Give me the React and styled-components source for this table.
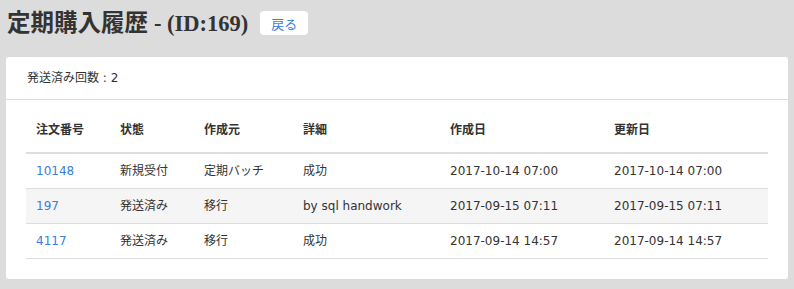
import React from "react";
import styled, { createGlobalStyle } from "styled-components";

const GlobalStyle = createGlobalStyle`
  html, body {
    margin: 0;
    padding: 0;
    background: #dcdcdc;
  }
  body {
    font-family: "DejaVu Sans", "Noto Sans CJK JP", sans-serif;
    color: #333;
  }
`;

const rows = [
  { id: "10148", status: "新規受付", source: "定期バッチ", detail: "成功", created: "2017-10-14 07:00", updated: "2017-10-14 07:00" },
  { id: "197", status: "発送済み", source: "移行", detail: "by sql handwork", created: "2017-09-15 07:11", updated: "2017-09-15 07:11" },
  { id: "4117", status: "発送済み", source: "移行", detail: "成功", created: "2017-09-14 14:57", updated: "2017-09-14 14:57" },
];

const columns = [
  { label: "注文番号", width: 84 },
  { label: "状態", width: 84 },
  { label: "作成元", width: 99 },
  { label: "詳細", width: 147 },
  { label: "作成日", width: 164 },
  { label: "更新日", width: 164 },
];

const App = () => {
  return (
    <>
      <GlobalStyle />
      <Page>
        <TitleBar>
          <Title>
            定期購入履歴 <SubTitle>- (ID:169)</SubTitle>
          </Title>
          <BackButton>戻る</BackButton>
        </TitleBar>
        <Card>
          <CardHeader>発送済み回数 : 2</CardHeader>
          <CardBody>
            <Table>
              <colgroup>
                {columns.map((c) => (
                  <col key={c.label} style={{ width: c.width }} />
                ))}
              </colgroup>
              <thead>
                <tr>
                  {columns.map((c) => (
                    <Th key={c.label}>{c.label}</Th>
                  ))}
                </tr>
              </thead>
              <tbody>
                {rows.map((r, i) => (
                  <Row key={r.id} $striped={i % 2 === 1}>
                    <Td>
                      <Link>{r.id}</Link>
                    </Td>
                    <Td>{r.status}</Td>
                    <Td>{r.source}</Td>
                    <Td>{r.detail}</Td>
                    <Td>{r.created}</Td>
                    <Td>{r.updated}</Td>
                  </Row>
                ))}
              </tbody>
            </Table>
          </CardBody>
        </Card>
      </Page>
    </>
  );
};

const Page = styled.div`
  padding: 10px 6px;
`;

const TitleBar = styled.div`
  display: flex;
  align-items: center;
  height: 26px;
  margin-bottom: 21px;
`;

const Title = styled.h1`
  margin: 0 0 0 1px;
  font-family: "Liberation Serif", "Noto Sans CJK JP", serif;
  font-size: 23.5px;
  font-weight: bold;
  color: #333;
  line-height: 26px;
  white-space: nowrap;
`;

const SubTitle = styled.span`
  font-size: 22.5px;
`;

const BackButton = styled.span`
  margin-left: 12px;
  width: 48px;
  height: 24px;
  display: inline-flex;
  align-items: center;
  justify-content: center;
  background: #fff;
  border-radius: 4px;
  font-family: "Noto Sans CJK JP", sans-serif;
  font-size: 13px;
  color: #3b7ddd;
`;

const Card = styled.div`
  background: #fff;
  border-radius: 3px;
`;

const CardHeader = styled.div`
  padding: 12px 21px;
  font-size: 12px;
  line-height: 18px;
  border-bottom: 1px solid #ddd;
`;

const CardBody = styled.div`
  padding: 10px 20px 20px;
`;

const Table = styled.table`
  width: 100%;
  border-collapse: collapse;
  table-layout: fixed;
  font-size: 12px;
`;

const Th = styled.th`
  text-align: left;
  font-weight: bold;
  padding: 10px 10px 15px;
  line-height: 17px;
  border-bottom: 2px solid #ddd;
  font-family: "Noto Sans CJK JP", sans-serif;
`;

const Row = styled.tr`
  background: ${({ $striped }) => ($striped ? "#f5f5f5" : "#fff")};
`;

const Td = styled.td`
  padding: 0 10px;
  height: 34px;
  line-height: 17px;
  border-bottom: 1px solid #ddd;
  white-space: nowrap;
`;

const Link = styled.span`
  color: #3b7ddd;
`;

export default App;
